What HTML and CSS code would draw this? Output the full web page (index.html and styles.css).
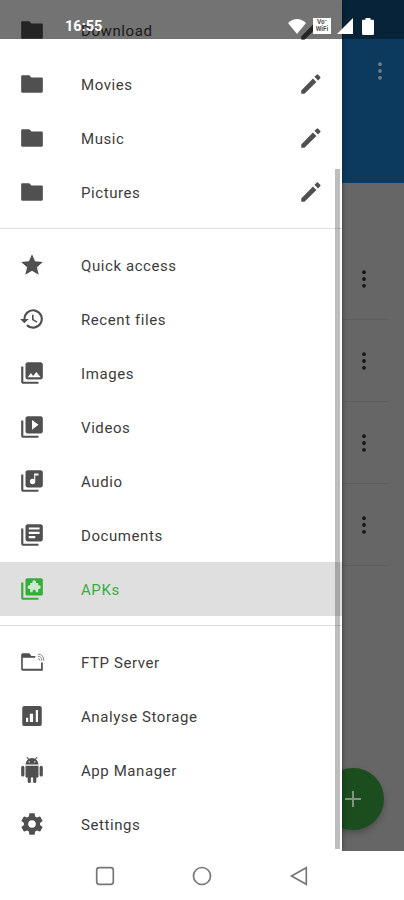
FILE: index.html
```html
<!DOCTYPE html>
<html lang="en">
<head>
<meta charset="utf-8">
<title>File manager</title>
<link rel="stylesheet" href="styles.css">
</head>
<body>
<svg class="defs" aria-hidden="true">
  <symbol id="folder" viewBox="0 0 24 24"><path d="M9.500 4H3c-.6 0-1 .4-1 1v14c0 .6.4 1 1 1h18c.6 0 1-.4 1-1V7c0-.6-.4-1-1-1h-9.500z"/></symbol>
  <symbol id="edit" viewBox="0 0 24 24"><path d="M3 18V21h3L17 10.200l-3.200-3.200zM20.500 6.700a1 1 0 0 0 0-1.400l-1.900-1.900a1 1 0 0 0-1.400 0l-2 2 3.300 3.300z"/></symbol>
  <symbol id="star" viewBox="0 0 24 24"><path d="M12 17.270 18.180 21l-1.640-7.030L22 9.240l-7.190-.61L12 2 9.190 8.630 2 9.240l5.460 4.730L5.820 21z"/></symbol>
  <symbol id="history" viewBox="0 0 24 24"><path d="M13 3a9 9 0 0 0-9 9H1l3.890 3.890.07.14L9 12H6a7 7 0 1 1 2.060 4.940l-1.420 1.420A9 9 0 1 0 13 3zm-1 5v5l4.280 2.540.72-1.210-3.500-2.080V8z"/></symbol>
  <symbol id="more" viewBox="0 0 6 20"><circle cx="3" cy="3.200" r="1.900"/><circle cx="3" cy="10" r="1.900"/><circle cx="3" cy="16.800" r="1.900"/></symbol>
</svg>
<div class="phone">
  <main class="app">
    <header class="toolbar"><svg class="dots light"><use href="#more"/></svg></header>
    <section class="files">
      <div class="file"><svg class="dots"><use href="#more"/></svg></div>
      <div class="file"><svg class="dots"><use href="#more"/></svg></div>
      <div class="file"><svg class="dots"><use href="#more"/></svg></div>
      <div class="file"><svg class="dots"><use href="#more"/></svg></div>
    </section>
    <button class="fab" aria-label="Add"><svg viewBox="0 0 16 16"><path d="M8 0v16M0 8h16"/></svg></button>
    <nav class="drawer">
      <div class="item"><svg class="icon"><use href="#folder"/></svg><span>Download</span><svg class="icon edit"><use href="#edit"/></svg></div>
      <div class="item"><svg class="icon"><use href="#folder"/></svg><span>Movies</span><svg class="icon edit"><use href="#edit"/></svg></div>
      <div class="item"><svg class="icon"><use href="#folder"/></svg><span>Music</span><svg class="icon edit"><use href="#edit"/></svg></div>
      <div class="item"><svg class="icon"><use href="#folder"/></svg><span>Pictures</span><svg class="icon edit"><use href="#edit"/></svg></div>
      <hr>
      <div class="item"><svg class="icon"><use href="#star"/></svg><span>Quick access</span></div>
      <div class="item"><svg class="icon"><use href="#history"/></svg><span>Recent files</span></div>
      <div class="item"><svg class="icon" viewBox="0 0 24 24"><path d="M22 16V4c0-1.100-.9-2-2-2H8c-1.100 0-2 .9-2 2v12c0 1.100.9 2 2 2h12c1.100 0 2-.9 2-2zm-11-4 2.030 2.710L16 11l4 5H8zM2 6v14c0 1.100.9 2 2 2h14v-2H4V6z"/></svg><span>Images</span></div>
      <div class="item"><svg class="icon" viewBox="0 0 24 24"><path d="M4 6H2v14c0 1.100.9 2 2 2h14v-2H4zm16-4H8c-1.100 0-2 .9-2 2v12c0 1.100.9 2 2 2h12c1.100 0 2-.9 2-2V4c0-1.100-.9-2-2-2zm-8 12.500v-9l6 4.500z"/></svg><span>Videos</span></div>
      <div class="item"><svg class="icon" viewBox="0 0 24 24"><path d="M20 2H8c-1.100 0-2 .9-2 2v12c0 1.100.9 2 2 2h12c1.100 0 2-.9 2-2V4c0-1.100-.9-2-2-2zm-2 5h-3v5.500a2.500 2.500 0 1 1-2.500-2.500c.57 0 1.080.19 1.500.51V5h4zM4 6H2v14c0 1.100.9 2 2 2h14v-2H4z"/></svg><span>Audio</span></div>
      <div class="item"><svg class="icon" viewBox="0 0 24 24"><path d="M4 6H2v14c0 1.100.9 2 2 2h14v-2H4zm16-4H8c-1.100 0-2 .9-2 2v12c0 1.100.9 2 2 2h12c1.100 0 2-.9 2-2V4c0-1.100-.9-2-2-2zm-1 9H9V9h10zm-4 4H9v-2h6zm4-8H9V5h10z"/></svg><span>Documents</span></div>
      <div class="item active"><svg class="icon" viewBox="0 0 24 24"><path d="M4 6H2v14c0 1.100.9 2 2 2h14v-2H4z"/><path d="M20.500 2h-13C6.700 2 6 2.700 6 3.500v13c0 .8.7 1.500 1.500 1.500h13c.8 0 1.500-.7 1.500-1.500v-13c0-.8-.7-1.500-1.500-1.500z"/><path class="puzzle" d="M12.300 6.500V5.600a1.700 1.700 0 0 1 3.400 0v.9h2v2h.7a1.700 1.700 0 0 1 0 3.400h-.7v3h-2.200v-.6a1.500 1.500 0 0 0-3 0v.6h-2.200v-3h-.7a1.700 1.700 0 0 1 0-3.400h.7v-2z"/></svg><span>APKs</span></div>
      <hr>
      <div class="item"><svg class="icon" viewBox="0 0 24 24"><path d="M9.500 4H3.500C2.700 4 2 4.700 2 5.500v13c0 .8.7 1.500 1.500 1.500H22v-7.500h-1.600v5.800H3.500V8H15V6.500h-3.500z"/><path class="line" d="M17.500 8.800q1.800 0 1.800 2M17.500 6.800q3.600 0 3.600 4M17.500 4.800q5.400 0 5.400 6"/></svg><span>FTP Server</span></div>
      <div class="item"><svg class="icon" viewBox="0 0 24 24"><path d="M19 2.700H5a2 2 0 0 0-2 2v14.600a2 2 0 0 0 2 2h14a2 2 0 0 0 2-2V4.700a2 2 0 0 0-2-2zM8.500 17.500h-2v-4h2zm4.500 0h-3V10h3zm4.500 0h-2v-11h2z"/></svg><span>Analyse Storage</span></div>
      <div class="item"><svg class="icon" viewBox="0 0 24 24"><path d="M6 18c0 .55.450 1 1 1h1v3.500a1.500 1.500 0 0 0 3 0V19h2v3.500a1.500 1.500 0 0 0 3 0V19h1c.55 0 1-.45 1-1V8H6zM3.500 8A1.500 1.500 0 0 0 2 9.500v7a1.500 1.500 0 0 0 3 0v-7A1.500 1.500 0 0 0 3.500 8zm17 0A1.500 1.500 0 0 0 19 9.500v7a1.500 1.500 0 0 0 3 0v-7A1.500 1.500 0 0 0 20.500 8zm-4.970-5.840 1.300-1.300a.5.5 0 0 0-.71-.71l-1.480 1.480A5.840 5.840 0 0 0 12 1c-.96 0-1.860.23-2.660.63L7.850.15a.5.5 0 0 0-.71.71l1.310 1.310A5.980 5.980 0 0 0 6 7h12a5.990 5.990 0 0 0-2.470-4.840zM10 5H9V4h1zm5 0h-1V4h1z"/></svg><span>App Manager</span></div>
      <div class="item"><svg class="icon" viewBox="0 0 24 24"><path d="M19.430 12.980c.04-.32.070-.64.070-.98s-.03-.66-.07-.98l2.110-1.650a.5.5 0 0 0 .12-.64l-2-3.460a.5.5 0 0 0-.61-.22l-2.490 1a7.300 7.300 0 0 0-1.690-.98l-.38-2.650A.49.49 0 0 0 14 2h-4a.49.49 0 0 0-.49.420l-.38 2.650c-.61.25-1.170.59-1.690.98l-2.490-1a.49.49 0 0 0-.61.220l-2 3.460a.49.49 0 0 0 .12.640l2.110 1.650c-.04.32-.07.650-.07.980s.03.660.07.980l-2.110 1.650a.5.5 0 0 0-.12.640l2 3.460c.12.220.39.300.61.220l2.490-1c.52.400 1.080.730 1.690.980l.38 2.650c.03.240.24.420.49.420h4c.25 0 .46-.18.490-.42l.38-2.650c.61-.25 1.170-.59 1.690-.98l2.490 1c.23.090.49 0 .61-.22l2-3.460a.5.5 0 0 0-.12-.64zM12 15.500a3.500 3.500 0 1 1 0-7 3.500 3.500 0 0 1 0 7z"/></svg><span>Settings</span></div>
      <div class="scrollbar"></div>
    </nav>
    <div class="status">
      <time>16:55</time>
      <div class="signals">
        <svg class="wifi" viewBox="0 0 18 15"><path d="M0 4Q9-4 18 4L9 15z"/></svg>
        <span class="vowifi"><span>Vo&#8315;</span><span>WiFi</span></span>
        <svg class="cell" viewBox="0 0 16 16"><path d="M16 0v16H0z"/></svg>
        <svg class="battery" viewBox="0 0 12 17"><path d="M3.500 0h5v1.800H11q1 0 1 1V15.500q0 1.500-1.500 1.500h-9Q0 17 0 15.500V2.800q0-1 1-1h2.500z"/></svg>
      </div>
    </div>
  </main>
  <footer class="navbar">
    <svg viewBox="0 0 20 20"><rect x="1.700" y="1.700" width="16.600" height="16.600" rx="2.500"/></svg>
    <svg viewBox="0 0 20 20"><circle cx="10" cy="10" r="8.500"/></svg>
    <svg viewBox="0 0 20 20"><path d="M17.300 1.800v16.400L2.500 10z"/></svg>
  </footer>
</div>
</body>
</html>
```
FILE: styles.css
```css
* { box-sizing: border-box; }
body { margin: 0; font-family: Roboto, sans-serif; background: #fff; }
.defs { position: absolute; width: 0; height: 0; }
.phone { width: 404px; height: 900px; display: flex; flex-direction: column; overflow: hidden; }
.app { position: relative; height: 851px; background: #666; overflow: hidden; }
.toolbar { height: 183px; background: #0c3a5e; display: flex; justify-content: flex-end; padding: 61px 21px 0 0; }
.dots { width: 6px; height: 20px; fill: #161616; }
.dots.light { fill: #777d80; }
.files { padding: 55px 16px 0 0; }
.file { height: 82px; border-bottom: 1px solid #5d5d5d; display: flex; justify-content: flex-end; align-items: center; padding-right: 21px; }
.fab { position: absolute; left: 322px; top: 768px; width: 62px; height: 62px; border: 0; border-radius: 50%; background: #1b4d1f; box-shadow: 0 3px 6px rgba(0,0,0,.25); display: grid; place-items: center; padding: 0; }
.fab svg { width: 16px; height: 16px; stroke: #809580; stroke-width: 2; }

.drawer { position: absolute; left: 0; top: 0; width: 342px; height: 851px; padding-top: 3px; background: #fff; box-shadow: 0 0 5px rgba(0,0,0,.45); }
.item { height: 54px; display: flex; align-items: center; padding: 0 18px 0 19px; color: #3c3c3c; font-size: 15px; font-weight: 400; letter-spacing: .58px; }
.item span { margin: 1px 0 0 36px; }
.icon { width: 26px; height: 26px; fill: #505050; flex: none; }
.icon.edit { margin-left: auto; }
.icon .line { fill: none; stroke: #888; stroke-width: .9; }
.item.active { background: #dfdfdf; color: #3aae3f; }
.active .icon { fill: #35ad3a; }
.icon .puzzle { fill: #cfe6d0; }
hr { margin: 9px 0; border: 0; height: 1px; background: #dedede; }
.scrollbar { position: absolute; right: 2px; top: 169px; width: 5px; height: 680px; background: rgba(0,0,0,.26); }

.status { position: absolute; inset: 0 0 auto; height: 39px; display: flex; justify-content: space-between; align-items: flex-start; padding: 18px 30px 0 65px; background: linear-gradient(90deg, rgba(0,0,0,.55) 342px, rgba(0,0,0,.4) 342px); color: #fff; }
.status time { font-size: 14.500px; line-height: 18px; font-weight: 700; }
.signals { display: flex; align-items: flex-start; fill: #fff; }
.wifi { width: 18px; height: 15px; margin: 1px 7px 0 0; }
.vowifi { width: 18px; height: 16px; background: #fff; color: #555; font-size: 6.500px; font-weight: 700; line-height: 7px; padding: 1px; display: flex; flex-direction: column; align-items: center; margin-right: 6px; }
.cell { width: 16px; height: 16px; margin-right: 9px; }
.battery { width: 12px; height: 17px; }

.navbar { height: 49px; background: #fff; display: flex; justify-content: center; align-items: center; gap: 77px; }
.navbar svg { width: 20px; height: 20px; fill: none; stroke: #777; stroke-width: 1.700; }
```
